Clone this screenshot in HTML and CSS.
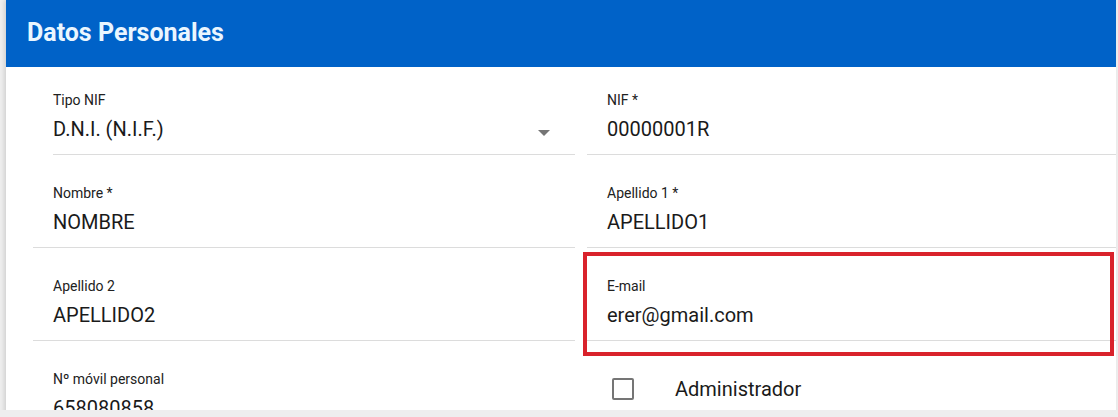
FILE: index.html
```html
<!DOCTYPE html>
<html lang="es">
<head>
<meta charset="utf-8">
<title>Datos Personales</title>
<link rel="stylesheet" href="styles.css">
</head>
<body>
<div class="viewport">
  <section class="card">
    <header class="card-header"><h1 class="card-title">Datos Personales</h1></header>
    <div class="form">
      <div class="field field-select">
        <div class="field-label">Tipo NIF</div>
        <div class="field-value">D.N.I. (N.I.F.)</div>
        <span class="select-arrow"></span>
      </div>
      <div class="field">
        <div class="field-label">NIF *</div>
        <div class="field-value">00000001R</div>
      </div>
      <div class="field">
        <div class="field-label">Nombre *</div>
        <div class="field-value">NOMBRE</div>
      </div>
      <div class="field">
        <div class="field-label">Apellido 1 *</div>
        <div class="field-value">APELLIDO1</div>
      </div>
      <div class="field">
        <div class="field-label">Apellido 2</div>
        <div class="field-value">APELLIDO2</div>
      </div>
      <div class="field field-highlight">
        <div class="field-label">E-mail</div>
        <div class="field-value">erer@gmail.com</div>
      </div>
      <div class="field">
        <div class="field-label">Nº móvil personal</div>
        <div class="field-value">658080858</div>
      </div>
      <div class="check-row">
        <span class="checkbox"></span>
        <span class="check-label">Administrador</span>
      </div>
    </div>
  </section>
</div>
</body>
</html>
```
FILE: styles.css
```css
html, body {
  margin: 0;
  padding: 0;
}
body {
  background: #eeeeee;
  font-family: Roboto, "Liberation Sans", sans-serif;
  color: #212121;
  width: 1118px;
  height: 417px;
  overflow: hidden;
}
.viewport {
  height: 410px;
  overflow: hidden;
  padding: 0 2px 0 6px;
}
.card {
  background: #ffffff;
  box-shadow: -2px 0 4px rgba(0, 0, 0, 0.12);
  min-height: 600px;
}
.card-header {
  height: 67px;
  background: #0062c8;
  display: flex;
  align-items: center;
  padding-left: 21px;
}
.card-title {
  margin: 0;
  font-size: 25px;
  font-weight: 700;
  color: #eaf6ff;
  line-height: 30px;
  margin-top: -1px;
}
.form {
  display: grid;
  grid-template-columns: 542px 1fr;
  column-gap: 12px;
  row-gap: 5px;
  padding-left: 27px;
}
.field {
  position: relative;
  padding: 25px 0 13px 20px;
  border-bottom: 1px solid #dcdcdc;
}
.field-label {
  font-size: 14px;
  line-height: 16px;
  color: #212121;
}
.field-value {
  margin-top: 9px;
  font-size: 20px;
  line-height: 24px;
  color: #1a1a1a;
}
.field-select {
  margin-left: 20px;
  padding-left: 0;
}
.select-arrow {
  position: absolute;
  right: 25px;
  top: 63px;
  width: 0;
  height: 0;
  border-left: 6px solid transparent;
  border-right: 6px solid transparent;
  border-top: 6px solid #757575;
}
.field-highlight::after {
  content: "";
  position: absolute;
  left: -4px;
  right: 2px;
  top: -1px;
  bottom: -16px;
  border: 4px solid #d9222b;
}
.check-row {
  display: flex;
  align-items: center;
  padding: 31px 0 0 25px;
  align-self: start;
}
.checkbox {
  width: 18px;
  height: 18px;
  border: 2px solid #757575;
  border-radius: 2px;
  box-sizing: content-box;
}
.check-label {
  margin-left: 41px;
  font-size: 20px;
  line-height: 24px;
  color: #1a1a1a;
}
```
